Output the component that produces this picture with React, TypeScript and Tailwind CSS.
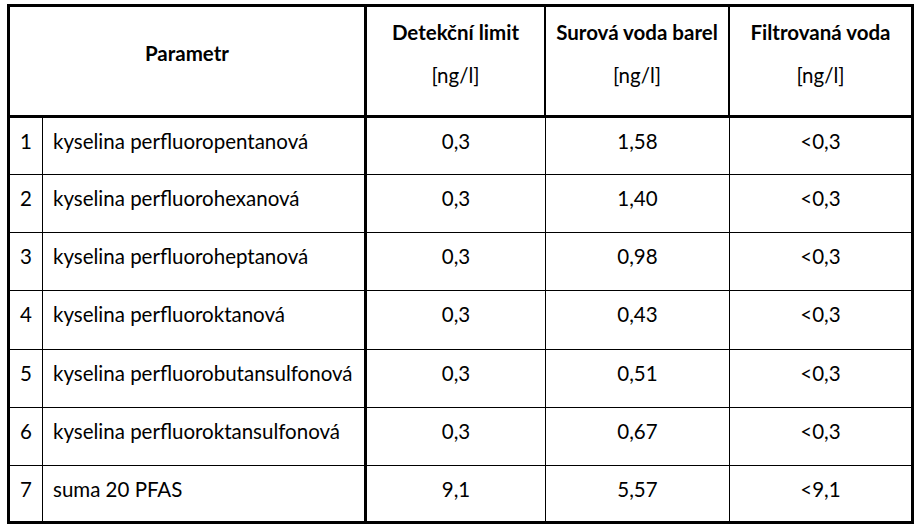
const rows = [
  { n: "1", name: "kyselina perfluoropentanová", det: "0,3", raw: "1,58", filt: "<0,3", h: "h-[57px]" },
  { n: "2", name: "kyselina perfluorohexanová", det: "0,3", raw: "1,40", filt: "<0,3", h: "h-[58px]" },
  { n: "3", name: "kyselina perfluoroheptanová", det: "0,3", raw: "0,98", filt: "<0,3", h: "h-[58px]" },
  { n: "4", name: "kyselina perfluoroktanová", det: "0,3", raw: "0,43", filt: "<0,3", h: "h-[59px]" },
  { n: "5", name: "kyselina perfluorobutansulfonová", det: "0,3", raw: "0,51", filt: "<0,3", h: "h-[58px]" },
  { n: "6", name: "kyselina perfluoroktansulfonová", det: "0,3", raw: "0,67", filt: "<0,3", h: "h-[58px]" },
  { n: "7", name: "suma 20 PFAS", det: "9,1", raw: "5,57", filt: "<9,1", h: "h-[55px]" },
];

const headers = [
  { title: "Detekční limit", w: "w-[179px]", border: "border-r-2" },
  { title: "Surová voda barel", w: "w-[184px]", border: "border-r-2" },
  { title: "Filtrovaná voda", w: "w-[181px]", border: "" },
];

export default function App() {
  return (
    <div className="w-[918px] h-[532px] bg-white pt-[4px] pl-[7px] text-black font-['Lato','Open_Sans',sans-serif] text-[20.5px] leading-[24px]">
      <div className="w-[907px] border-[3px] border-black">
        {/* header */}
        <div className="flex h-[111px] border-b-[3px] border-black">
          <div className="w-[357px] border-r-[3px] border-black pt-[34px] text-center font-bold">
            Parametr
          </div>
          {headers.map((h) => (
            <div key={h.title} className={`${h.w} ${h.border} border-black pt-[13px] text-center whitespace-nowrap`}>
              <div className="font-bold">{h.title}</div>
              <div className="mt-[19px]">[ng/l]</div>
            </div>
          ))}
        </div>

        {/* data rows */}
        {rows.map((r, i) => (
          <div
            key={r.n}
            className={`flex ${r.h} ${i < rows.length - 1 ? "border-b border-black" : ""}`}
          >
            <div className="w-[33px] border-r border-black pt-[11px] text-center">{r.n}</div>
            <div className="w-[324px] border-r-[3px] border-black pt-[11px] pl-[10px] whitespace-nowrap">
              {r.name}
            </div>
            <div className="w-[179px] border-r border-black pt-[11px] text-center">{r.det}</div>
            <div className="w-[184px] border-r border-black pt-[11px] text-center">{r.raw}</div>
            <div className="w-[181px] pt-[11px] text-center">{r.filt}</div>
          </div>
        ))}
      </div>
    </div>
  );
}
